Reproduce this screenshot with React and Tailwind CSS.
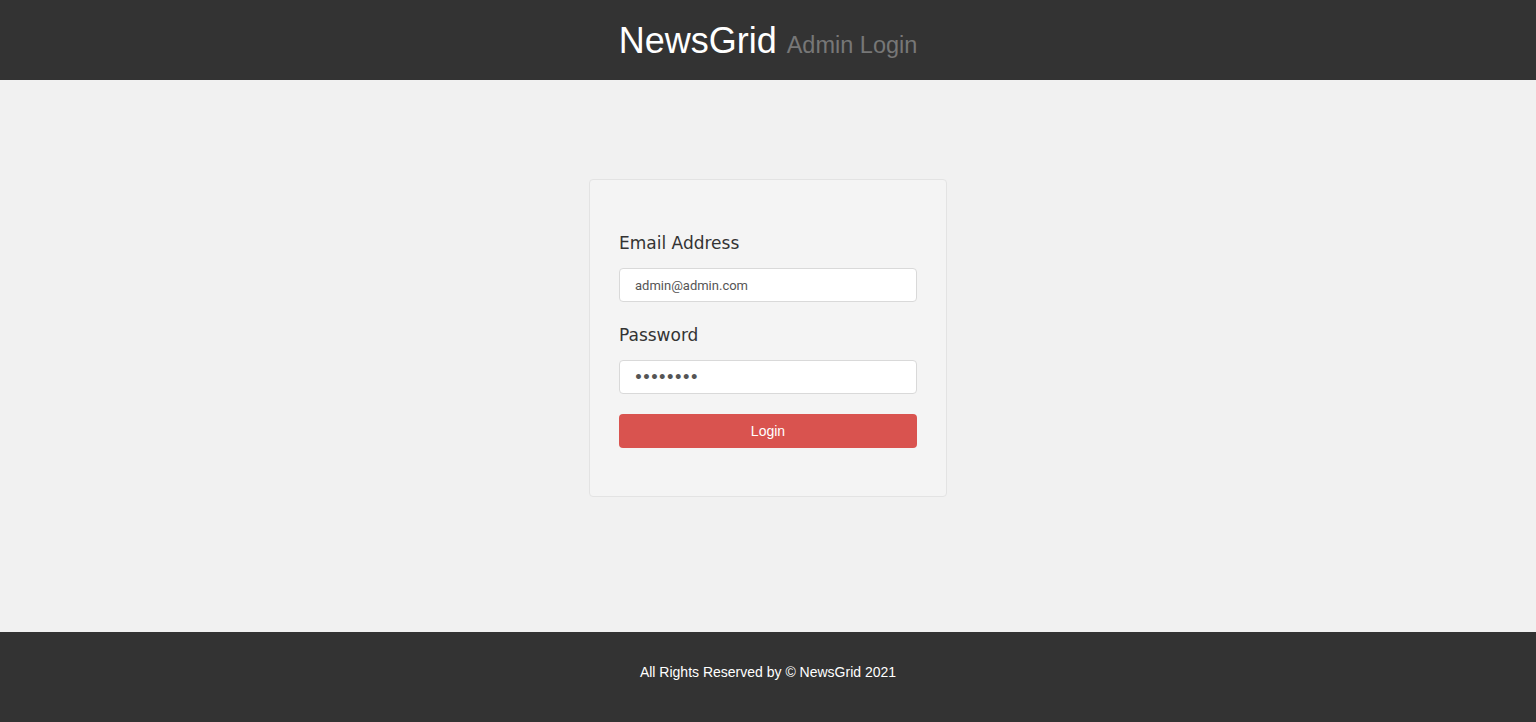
import React, { useState } from "react";

const App = () => {
  const [email, setEmail] = useState("admin@admin.com");
  const [password, setPassword] = useState("12345678");

  return (
    <div className="min-h-screen flex flex-col bg-[#f1f1f1]" style={{ fontFamily: "'Liberation Sans', Arial, sans-serif" }}>
      <header className="h-[80px] bg-[#333333] flex items-center justify-center">
        <h1 className="flex items-baseline gap-[10px] leading-none pt-[2px]">
          <span className="text-[36px] text-white">NewsGrid</span>
          <span className="text-[23.5px] text-[#777777]">Admin Login</span>
        </h1>
      </header>

      <main className="flex-1 flex justify-center pt-[99px]">
        <div className="w-[358px] h-[318px] bg-[#f4f4f4] border border-[#e3e3e3] rounded-[4px] px-[29px] pt-[53px]">
          <form onSubmit={(e) => e.preventDefault()}>
            <label
              className="block text-[17px] text-[#333333] leading-[20px] mb-[15px]"
              style={{ fontFamily: "'DejaVu Sans', Verdana, sans-serif" }}
            >
              Email Address
            </label>
            <input
              type="email"
              value={email}
              onChange={(e) => setEmail(e.target.value)}
              className="block w-full h-[34px] bg-white border border-[#d9d9d9] rounded-[4px] px-[15px] text-[13px] text-[#555555] outline-none"
              style={{ fontFamily: "Roboto, sans-serif" }}
            />
            <label
              className="block text-[17px] text-[#333333] leading-[20px] mt-[23px] mb-[15px]"
              style={{ fontFamily: "'DejaVu Sans', Verdana, sans-serif" }}
            >
              Password
            </label>
            <input
              type="password"
              value={password}
              onChange={(e) => setPassword(e.target.value)}
              className="block w-full h-[34px] bg-white border border-[#d9d9d9] rounded-[4px] pl-[14px] pr-[15px] text-[14px] font-bold tracking-[-1px] text-[#555555] outline-none"
              style={{ fontFamily: "'DejaVu Sans', Verdana, sans-serif" }}
            />
            <button
              type="submit"
              className="mt-[20px] w-full h-[34px] bg-[#d9534f] text-white text-[14px] rounded-[4px] cursor-pointer"
            >
              Login
            </button>
          </form>
        </div>
      </main>

      <footer className="h-[90px] bg-[#333333] flex justify-center pt-[32px]">
        <p className="text-[14px] leading-[16px] text-white">All Rights Reserved by © NewsGrid 2021</p>
      </footer>
    </div>
  );
};

export default App;
